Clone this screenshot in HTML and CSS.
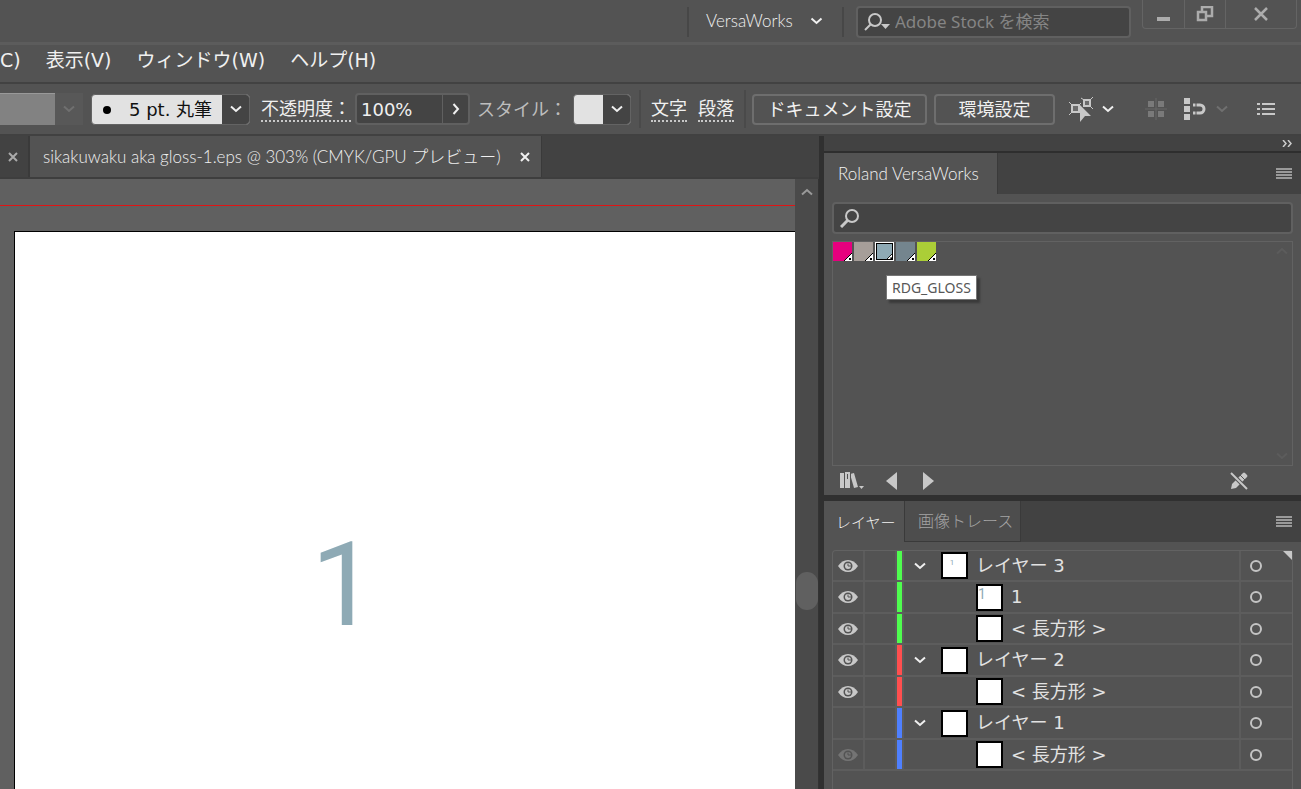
FILE: index.html
```html
<!DOCTYPE html>
<html lang="ja">
<head>
<meta charset="utf-8">
<title>sikakuwaku aka gloss-1.eps</title>
<link rel="stylesheet" href="styles.css">
</head>
<body>
<svg class="defs" aria-hidden="true">
  <symbol id="down" viewBox="0 0 12 8"><path d="M1 1.5 6 6l5-4.500" fill="none" stroke="currentColor" stroke-width="2"/></symbol>
  <symbol id="up" viewBox="0 0 12 8"><path d="M1 6.500 6 2l5 4.500" fill="none" stroke="currentColor" stroke-width="2"/></symbol>
  <symbol id="right" viewBox="0 0 8 12"><path d="M1.500 1 6 6l-4.500 5" fill="none" stroke="currentColor" stroke-width="2"/></symbol>
  <symbol id="cross" viewBox="0 0 10 10"><path d="M1 1l8 8M9 1 1 9" fill="none" stroke="currentColor" stroke-width="2"/></symbol>
  <symbol id="eye" viewBox="0 0 20 14"><path d="M0 7Q4 1 10 1t10 6q-4 6-10 6T0 7Z" fill="currentColor"/><circle cx="10" cy="7" r="4.500" fill="#535353"/><circle cx="10" cy="7" r="3" fill="currentColor"/><path d="M10 4.500V7h3" fill="none" stroke="#535353"/></symbol>
  <symbol id="menu" viewBox="0 0 16 11"><path d="M0 1h16M0 4h16M0 7h16M0 10h16" stroke="currentColor" stroke-width="1.500"/></symbol>
  <symbol id="spot" viewBox="0 0 8 8"><path d="M8 0v8H0z" fill="#fff"/><path d="M0 8 8 0" stroke="#000"/><path d="M5 5h2v2H5z" fill="#000"/></symbol>
</svg>
<div class="app">
  <header class="titlebar">
    <div class="workspace">
      <button class="workspace-button thin">VersaWorks <svg width="13" height="8"><use href="#down"/></svg></button>
    </div>
    <label class="stock">
      <svg width="27" height="20" viewBox="0 0 27 20"><circle cx="11" cy="8" r="6" fill="none" stroke="#c8c8c8" stroke-width="2"/><path d="M7 12 1 18" stroke="#c8c8c8" stroke-width="2"/><path d="M17 12h9l-4.500 5z" fill="#c8c8c8"/></svg>
      <input type="text" placeholder="Adobe Stock を検索" aria-label="Adobe Stock を検索">
    </label>
    <div class="window-buttons">
      <button aria-label="最小化"><svg width="15" height="20" viewBox="0 0 15 20"><path d="M1 13h13v4H1z" fill="#acacac"/></svg></button>
      <button aria-label="元に戻す"><svg width="18" height="16" viewBox="0 0 18 16"><path d="M6 5V1h10v9h-5M2 6h8v8H2z" fill="none" stroke="#acacac" stroke-width="2.500"/></svg></button>
      <button class="close" aria-label="閉じる"><svg width="14" height="14" viewBox="0 0 14 14"><path d="M1 1l12 12M13 1 1 13" stroke="#acacac" stroke-width="2.500"/></svg></button>
    </div>
  </header>
  <nav class="menubar">
    <button>C)</button><button>表示(V)</button><button>ウィンドウ(W)</button><button>ヘルプ(H)</button>
  </nav>
  <div class="toolbar">
    <div class="profile"><span></span><button disabled aria-label="プロファイル"><svg width="12" height="8"><use href="#down"/></svg></button></div>
    <button class="combo brush"><span class="brush-name"><i></i>5 pt. 丸筆</span><span class="arrow"><svg width="12" height="8"><use href="#down"/></svg></span></button>
    <label class="dotted opacity-label" for="opacity">不透明度：</label>
    <div class="opacity"><input id="opacity" type="text" value="100%"><button aria-label="不透明度を開く"><svg width="8" height="12"><use href="#right"/></svg></button></div>
    <span class="style-label">スタイル：</span>
    <button class="combo style" aria-label="スタイル"><span class="swatch"></span><span class="arrow"><svg width="12" height="8"><use href="#down"/></svg></span></button>
    <div class="text-links"><button class="dotted">文字</button><button class="dotted">段落</button></div>
    <button class="outlined document">ドキュメント設定</button>
    <button class="outlined prefs">環境設定</button>
    <div class="tool-icons">
      <button class="select-tool" aria-label="類似オブジェクトを選択">
        <svg width="25" height="25" viewBox="0 0 25 25"><path d="M3 8h7v7H3zM15 3h6v6h-6z" fill="#6c6c6c" stroke="#c8c8c8" stroke-width="2"/><path d="m0 5 3 3m7 0 2-2M0 18l3-3m9-14 3 2m6 0 3-3m-3 9 3 3" stroke="#c8c8c8"/><path d="m11 8 11 11h-6l-5 6z" fill="#c8c8c8"/></svg>
        <svg width="12" height="8"><use href="#down"/></svg>
      </button>
      <svg class="grid-icon" width="22" height="22" viewBox="0 0 22 22"><path d="M3 3h6v6H3zM13 3h6v6h-6zM3 13h6v6H3zM13 13h6v6h-6z" fill="#7a7a7a"/><path d="M11 0v22M0 11h22" stroke="#686868"/></svg>
      <button class="snap" aria-label="スナップ">
        <svg width="22" height="22" viewBox="0 0 22 22"><path d="M0 0h6v6H0zM0 8h6v6H0zM0 16h6v6H0z" fill="#c8c8c8"/><path d="M9 7h7a4 4 0 0 1 0 8H9" fill="none" stroke="#c8c8c8" stroke-width="3"/><path d="M12 5v12" stroke="#535353"/></svg>
        <svg class="faint" width="12" height="8"><use href="#down"/></svg>
      </button>
      <button class="list-icon" aria-label="メニュー"><svg width="18" height="14" viewBox="0 0 18 14"><path d="M0 2h3M0 7h3M0 12h3M5 2h13M5 7h13M5 12h13" stroke="#c8c8c8" stroke-width="2"/></svg></button>
    </div>
  </div>
  <div class="workarea">
    <main class="document-area">
      <div class="doc-tabs">
        <button class="tab-close" aria-label="閉じる"><svg width="10" height="10"><use href="#cross"/></svg></button>
        <div class="doc-tab thin"><span>sikakuwaku aka gloss-1.eps @ 303% (CMYK/GPU プレビュー)</span><button aria-label="閉じる"><svg width="10" height="10"><use href="#cross"/></svg></button></div>
      </div>
      <div class="viewport">
        <div class="canvas">
          <div class="bleed"><div class="artboard"><span class="art">1</span></div></div>
        </div>
        <div class="scrollbar"><svg width="12" height="8"><use href="#up"/></svg><span class="thumb"></span></div>
      </div>
    </main>
    <aside class="panels">
      <div class="collapse"><button aria-label="パネルを折りたたむ"><svg width="11" height="7" viewBox="0 0 11 7"><path d="m1 0 3 3.500L1 7m5-7 3 3.500L6 7" fill="none" stroke="#ccc" stroke-width="1.500"/></svg></button></div>
      <section class="panel swatches-panel">
        <div class="panel-tabs thin"><button class="panel-tab active roland">Roland VersaWorks</button><button class="panel-menu" aria-label="メニュー"><svg width="16" height="11"><use href="#menu"/></svg></button></div>
        <div class="panel-body">
          <label class="find"><svg width="20" height="19" viewBox="0 0 20 19"><circle cx="12" cy="7" r="6" fill="none" stroke="#c8c8c8" stroke-width="2"/><path d="m8 11-7 7" stroke="#c8c8c8" stroke-width="3"/></svg><input type="text" aria-label="検索"></label>
          <div class="swatch-box">
            <div class="swatch-list">
              <button class="chip magenta" aria-label="RDG_MAGENTA"><svg width="8" height="8"><use href="#spot"/></svg></button>
              <button class="chip taupe" aria-label="RDG_WHITE"><svg width="8" height="8"><use href="#spot"/></svg></button>
              <button class="chip gloss" aria-label="RDG_GLOSS"><svg width="7" height="7"><use href="#spot"/></svg></button>
              <button class="chip slate" aria-label="RDG_PRIMER"><svg width="8" height="8"><use href="#spot"/></svg></button>
              <button class="chip lime" aria-label="CutContour"><svg width="8" height="8"><use href="#spot"/></svg></button>
            </div>
            <div class="box-scroll"><svg width="12" height="8"><use href="#up"/></svg><svg width="12" height="8"><use href="#down"/></svg></div>
            <div class="tooltip" role="tooltip">RDG_GLOSS</div>
          </div>
          <div class="swatch-actions">
            <button aria-label="ライブラリ"><svg width="24" height="18" viewBox="0 0 24 18"><path d="M0 1h4v15H0zM5 0h5v16H5zM10 2l4-1 4 14-4 1z" fill="#c8c8c8"/><path d="M4.500 1v15M10.500 1v15M7.500 2v5" stroke="#535353"/><path d="M19 14h5l-2.500 3z" fill="#c8c8c8"/></svg></button>
            <button aria-label="前へ"><svg width="11" height="18" viewBox="0 0 11 18"><path d="M11 0v18L0 9z" fill="#c8c8c8"/></svg></button>
            <button aria-label="次へ"><svg width="11" height="18" viewBox="0 0 11 18"><path d="M0 0v18l11-9z" fill="#c8c8c8"/></svg></button>
            <button class="no-edit" aria-label="編集不可"><svg width="18" height="18" viewBox="0 0 18 18"><path d="m1 17 1-5L13 1q1-1 2 0l2 2q1 1 0 2L6 16z" fill="#c8c8c8"/><path d="m10 3 5 5" stroke="#535353"/><path d="m0 0 18 18" stroke="#535353" stroke-width="4"/><path d="m1 1 16 16" stroke="#c8c8c8" stroke-width="2"/></svg></button>
          </div>
        </div>
      </section>
      <section class="panel layers-panel">
        <div class="panel-tabs thin"><button class="panel-tab active layer-tab">レイヤー</button><button class="panel-tab trace-tab">画像トレース</button><button class="panel-menu" aria-label="メニュー"><svg width="16" height="11"><use href="#menu"/></svg></button></div>
        <div class="layer-body">
          <ul class="layers">
            <li class="layer green top"><button class="vis" aria-label="表示"><svg width="20" height="14"><use href="#eye"/></svg></button><span class="lock"></span><span class="mark"></span><button class="expand" aria-label="展開"><svg width="12" height="8"><use href="#down"/></svg></button><span class="preview center-one">1</span><span class="name">レイヤー 3</span><button class="target" aria-label="ターゲット"><i></i></button></li>
            <li class="layer green child"><button class="vis" aria-label="表示"><svg width="20" height="14"><use href="#eye"/></svg></button><span class="lock"></span><span class="mark"></span><span class="expand"></span><span class="preview corner-one">1</span><span class="name">1</span><button class="target" aria-label="ターゲット"><i></i></button></li>
            <li class="layer green child"><button class="vis" aria-label="表示"><svg width="20" height="14"><use href="#eye"/></svg></button><span class="lock"></span><span class="mark"></span><span class="expand"></span><span class="preview"></span><span class="name">&lt; 長方形 &gt;</span><button class="target" aria-label="ターゲット"><i></i></button></li>
            <li class="layer red"><button class="vis" aria-label="表示"><svg width="20" height="14"><use href="#eye"/></svg></button><span class="lock"></span><span class="mark"></span><button class="expand" aria-label="展開"><svg width="12" height="8"><use href="#down"/></svg></button><span class="preview"></span><span class="name">レイヤー 2</span><button class="target" aria-label="ターゲット"><i></i></button></li>
            <li class="layer red child"><button class="vis" aria-label="表示"><svg width="20" height="14"><use href="#eye"/></svg></button><span class="lock"></span><span class="mark"></span><span class="expand"></span><span class="preview"></span><span class="name">&lt; 長方形 &gt;</span><button class="target" aria-label="ターゲット"><i></i></button></li>
            <li class="layer blue"><button class="vis" aria-label="非表示"></button><span class="lock"></span><span class="mark"></span><button class="expand" aria-label="展開"><svg width="12" height="8"><use href="#down"/></svg></button><span class="preview"></span><span class="name">レイヤー 1</span><button class="target" aria-label="ターゲット"><i></i></button></li>
            <li class="layer blue child"><button class="vis dim" aria-label="表示"><svg width="20" height="14"><use href="#eye"/></svg></button><span class="lock"></span><span class="mark"></span><span class="expand"></span><span class="preview"></span><span class="name">&lt; 長方形 &gt;</span><button class="target" aria-label="ターゲット"><i></i></button></li>
          </ul>
        </div>
      </section>
    </aside>
  </div>
</div>
</body>
</html>
```

FILE: styles.css
```css
* { box-sizing: border-box; }
body { margin: 0; background: #535353; color: #f0f0f0; font: 18px/24px "DejaVu Sans", "Noto Sans CJK JP", sans-serif; }
button, input { margin: 0; padding: 0; border: 0; background: none; color: inherit; font: inherit; }
input { min-width: 0; outline: 0; }
svg { display: block; flex: none; }
.defs { position: absolute; width: 0; height: 0; }
.thin { font-family: Lato, "Noto Sans CJK JP", sans-serif; font-weight: 300; font-size: 17px; }
.app { display: flex; flex-direction: column; height: 100vh; overflow: hidden; }

.titlebar { display: flex; flex: none; height: 45px; padding-right: 4px; justify-content: flex-end; align-items: flex-start; border-bottom: 3px solid #5c5c5c; }
.workspace { margin-top: 7px; height: 30px; width: 157px; border: solid #474747; border-width: 0 2px; }
.workspace-button { display: flex; align-items: center; gap: 17px; height: 28px; padding-left: 17px; }
.stock { display: flex; align-items: center; width: 275px; height: 32px; margin: 6px 11px 0 12px; padding: 0 6px; gap: 4px; background: #444; border: 2px solid #606060; border-radius: 4px; }
.stock input { flex: 1; font: 17px/24px "Noto Sans", "Noto Sans CJK JP", sans-serif; }
.stock input::placeholder { color: #858585; opacity: 1; }
.window-buttons { display: flex; height: 29px; border: 1px solid #646464; border-top: 0; border-radius: 0 0 4px 4px; }
.window-buttons button { display: grid; place-items: center; width: 42px; border-right: 1px solid #646464; }
.window-buttons button:nth-child(2) { width: 41px; }
.window-buttons .close { width: 70px; border: 0; }

.menubar { display: flex; flex: none; gap: 25px; height: 39px; padding-bottom: 7px; border-bottom: 2px solid #424242; align-items: center; font-size: 19px; }

.toolbar { display: flex; flex: none; align-items: center; height: 52px; border-bottom: 2px solid #414141; }
.toolbar > * { flex: none; }
.profile { display: flex; width: 83px; height: 32px; }
.profile span { width: 55px; background: #828282; border-top: 1px solid #999; }
.profile button { display: grid; place-items: center; flex: 1; background: #585858; color: #707070; }
.combo { display: flex; height: 31px; border: 1px solid #636363; border-radius: 4px; background: #e2e2e2; overflow: hidden; }
.brush { width: 159px; margin-left: 8px; }
.brush-name { display: flex; align-items: center; flex: 1; height: 100%; color: #111; padding: 1px 0 0 11px; gap: 18px; }
.brush-name i { width: 8px; height: 8px; border-radius: 50%; background: #000; }
.arrow { display: grid; place-items: center; width: 27px; height: 100%; background: #444; color: #f0f0f0; }
.dotted { padding-top: 2px; border-bottom: 2px dotted #c8c8c8; line-height: 22px; }
.opacity-label { margin-left: 11px; width: 90px; white-space: nowrap; }
.opacity { display: flex; width: 115px; height: 32px; margin-left: 4px; border: 2px solid #606060; border-radius: 4px; background: #444; }
.opacity input { width: 86px; padding: 2px 0 0 4px; border-right: 1px solid #606060; }
.opacity button { display: grid; place-items: center; flex: 1; }
.style-label { width: 90px; margin-left: 7px; padding-top: 2px; color: #bdbdbd; }
.style { width: 58px; margin-left: 6px; }
.swatch { flex: 1; }
.text-links { display: flex; gap: 11px; height: 38px; width: 107px; margin-left: 8px; align-items: center; justify-content: center; border: solid #4a4a4a; border-width: 0 2px; }
.outlined { height: 31px; padding-top: 1px; border: 2px solid #6e6e6e; border-radius: 4px; white-space: nowrap; }
.document { width: 175px; margin-left: 6px; }
.prefs { width: 121px; margin-left: 7px; }
.tool-icons { display: flex; align-items: center; margin-left: 14px; }
.select-tool { display: flex; align-items: center; gap: 8px; }
.grid-icon { margin-left: 31px; }
.snap { display: flex; align-items: center; gap: 10px; margin-left: 17px; }
.faint { color: #707070; }
.list-icon { margin-left: 29px; }

.workarea { display: flex; flex: 1; min-height: 0; }
.document-area { display: flex; flex: 1; min-width: 0; flex-direction: column; }
.doc-tabs { display: flex; flex: none; height: 43px; background: #424242; border-bottom: 2px solid #3e3e3e; }
.tab-close { width: 30px; padding-left: 8px; border-right: 2px solid #3a3a3a; color: #aaa; }
.doc-tab { display: flex; align-items: center; justify-content: space-between; width: 512px; padding: 0 11px 0 13px; background: #535353; border-right: 1px solid #3a3a3a; white-space: nowrap; }
.viewport { display: flex; flex: 1; min-height: 0; }
.canvas { flex: 1; padding-top: 26px; background: #606060; }
.bleed { height: 100%; padding: 25px 0 0 14px; border-top: 1px solid #e01414; }
.artboard { height: 100%; padding: 273px 0 0 296px; background: #fff; border: solid #000; border-width: 1px 0 0 1px; }
.art { display: block; color: #8eaab5; font: 116px/160px Roboto, sans-serif; }
.scrollbar { display: flex; flex-direction: column; align-items: center; width: 24px; padding: 9px 0; background: #4a4a4a; color: #9a9a9a; border-right: 1px solid #333; }
.thumb { width: 22px; height: 38px; margin-top: 376px; border-radius: 11px; background: #606060; }

.panels { display: flex; flex: none; flex-direction: column; width: 482px; border-left: 5px solid #303030; }
.collapse { display: flex; flex: none; height: 17px; justify-content: flex-end; align-items: center; padding-right: 8px; background: #424242; border-bottom: 2px solid #2e2e2e; }
.panel { display: flex; flex-direction: column; }
.panel-tabs { display: flex; flex: none; height: 41px; background: #424242; }
.panel-tab { flex: none; padding-left: 14px; background: #4d4d4d; border: solid #3a3a3a; border-width: 0 1px 1px 0; color: #a4a4a4; text-align: left; white-space: nowrap; }
.panel-tab.active { background: #535353; border-bottom: 0; color: #f2f2f2; }
.roland { width: 174px; }
.layer-tab { width: 81px; font-size: 15px; padding-left: 12px; }
.trace-tab { width: 116px; font-size: 16px; padding-left: 13px; }
.panel-menu { margin-left: auto; padding-right: 9px; color: #b8b8b8; }
.panel-body { padding: 8px 8px 0; }
.find { display: flex; align-items: center; height: 32px; padding-left: 6px; gap: 8px; background: #444; border: 2px solid #606060; border-radius: 4px; }
.find input { flex: 1; }
.swatch-box { position: relative; display: flex; justify-content: space-between; height: 225px; margin-top: 7px; border: 1px solid #626262; }
.swatch-list { display: flex; gap: 2px; }
.chip { display: flex; align-items: flex-end; justify-content: flex-end; width: 19px; height: 19px; }
.magenta { background: #e6007e; }
.taupe { background: #a69e99; }
.gloss { background: #8eaab5; border: 1px solid #fff; outline: 1px solid #000; outline-offset: -2px; }
.slate { background: #74858e; }
.lime { background: #abce37; }
.box-scroll { display: flex; flex-direction: column; justify-content: space-between; padding: 5px 4px; color: #5c5c5c; }
.tooltip { position: absolute; top: 33px; left: 53px; padding: 0 5px; color: #575757; background: #fff; border: 1px solid #767676; box-shadow: 3px 3px 2px #3a3a3a; font: 14px/23px "Noto Sans", sans-serif; }
.swatch-actions { display: flex; align-items: center; height: 29px; padding: 0 45px 0 8px; gap: 22px; }
.swatch-actions button:nth-child(3) { margin-left: 4px; }
.swatch-actions .no-edit { margin-left: auto; }

.layers-panel { flex: 1; min-height: 0; border-top: 6px solid #303030; }
.layer-body { flex: 1; min-height: 0; padding: 8px 8px 0; }
.layers { height: 100%; margin: 0; padding: 0; list-style: none; border: 1px solid #626262; border-bottom: 0; border-radius: 4px 4px 0 0; }
.layer { position: relative; display: flex; align-items: stretch; height: 31px; border-bottom: 2px solid #5d5d5d; }
.layer:nth-child(even) { height: 32px; }
.vis { display: grid; justify-items: center; align-content: center; width: 32px; padding: 0; border-right: 2px solid #5c5c5c; color: #c8c8c8; }
.dim { color: #747474; }
.lock { width: 32px; border-right: 2px solid #5c5c5c; }
.mark { width: 7px; border-right: 2px solid #5c5c5c; }
.green .mark { background: #4ffd4f; }
.red .mark { background: #ff4f4f; }
.blue .mark { background: #4f80ff; }
.expand { display: grid; place-items: center; width: 32px; margin-right: 5px; }
.child .expand { margin-right: 40px; }
.preview { align-self: center; flex: none; width: 27px; height: 27px; background: #fff; border: 2px solid #000; color: #8eaab5; font: 8px/18px Roboto, sans-serif; text-align: center; }
.center-one { padding-right: 5px; }
.corner-one { font-size: 14px; line-height: 16px; text-align: left; }
.name { flex: 1; padding-left: 8px; line-height: 30px; color: #e2e2e2; white-space: nowrap; }
.target { display: flex; align-items: center; width: 53px; padding-left: 9px; border-left: 2px solid #5c5c5c; }
.target i { width: 12px; height: 12px; border: 2px solid #c4c4c4; border-radius: 50%; }
.top::after { content: ""; position: absolute; top: 0; right: 0; border: solid transparent; border-width: 0 9px 9px 0; border-right-color: #c8c8c8; }
```
